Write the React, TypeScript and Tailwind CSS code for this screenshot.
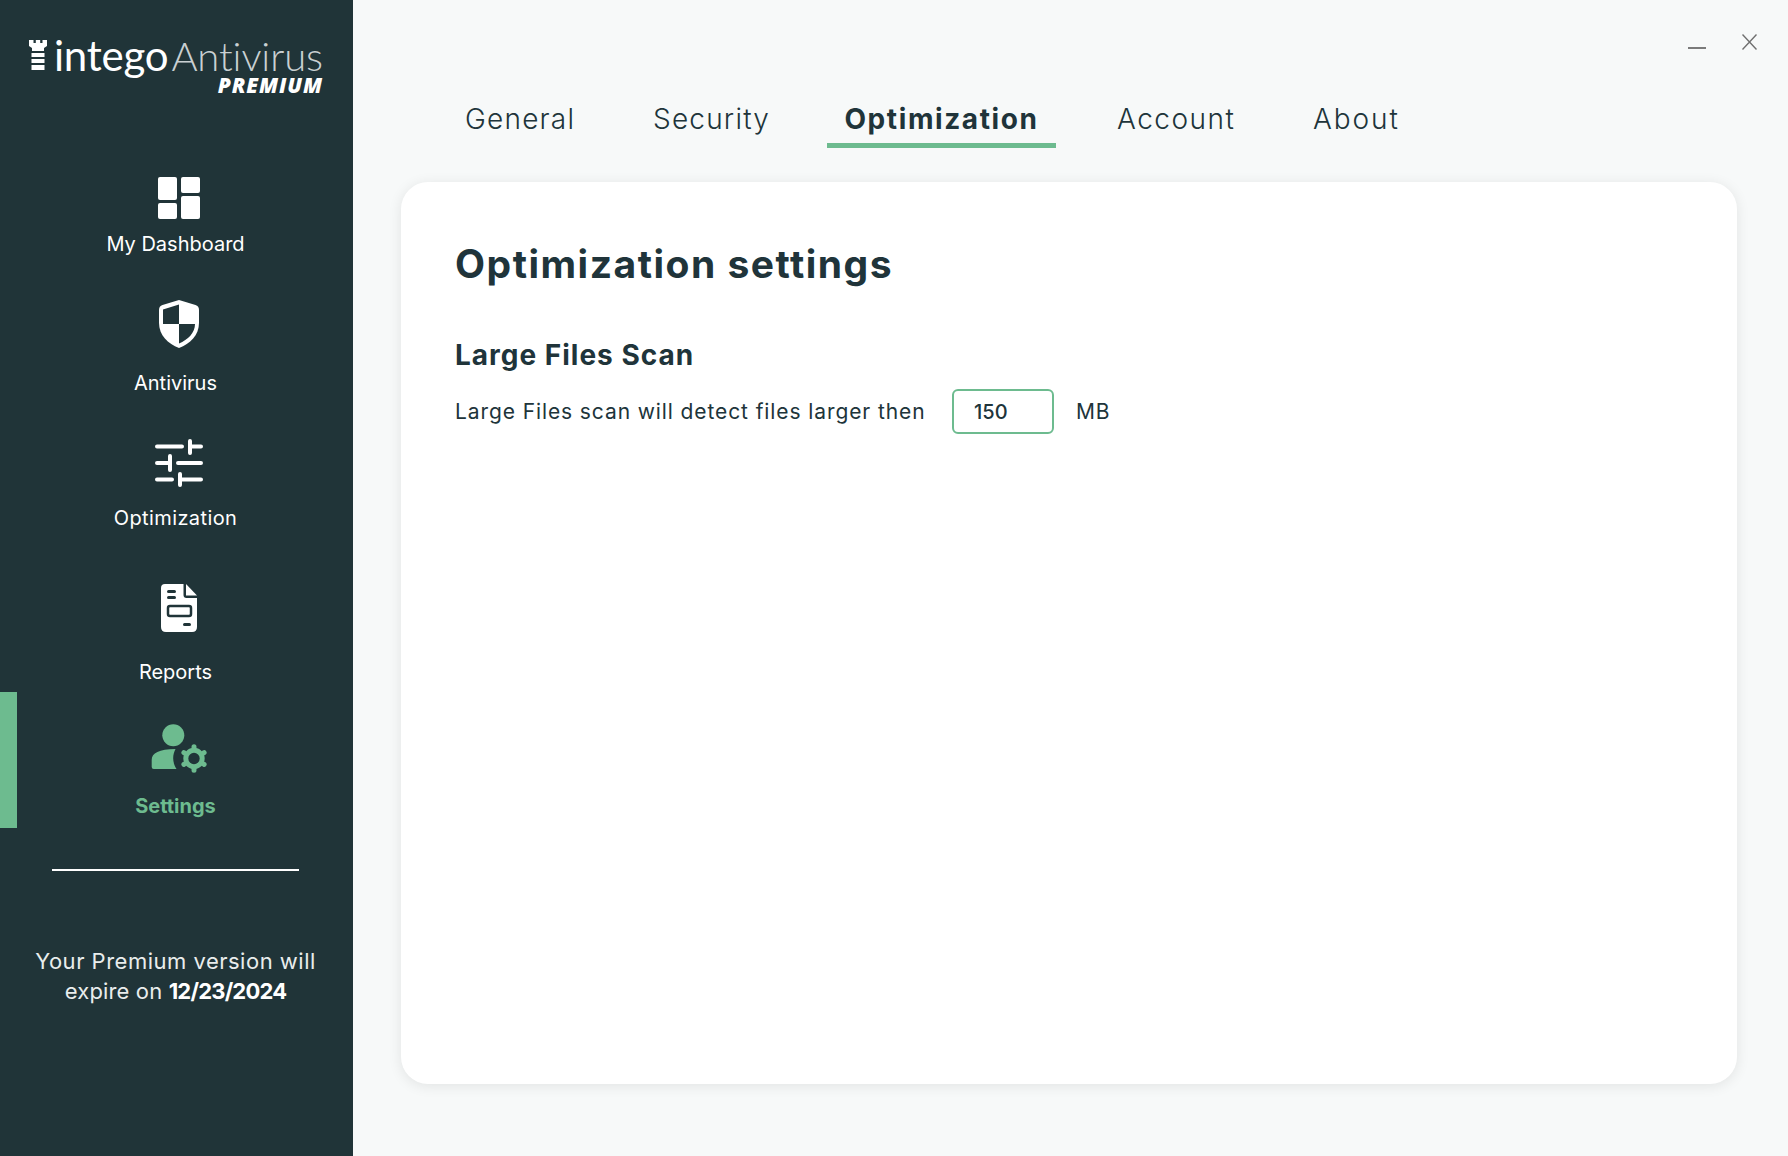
const sans = "font-['Inter',sans-serif]";
const DARK = "#203438";

function Dashboard() {
  return (
    <svg width="42" height="42" viewBox="0 0 42 42" fill="#fff">
      <rect x="0" y="0" width="19" height="23" rx="2" />
      <rect x="23" y="0" width="19" height="16" rx="2" />
      <rect x="0" y="26" width="19" height="16" rx="2" />
      <rect x="23" y="19" width="19" height="23" rx="2" />
    </svg>
  );
}

function Shield() {
  return (
    <svg width="40" height="48" viewBox="0 0 40 48">
      <path fill="#fff" d="M20 0 L36.5 5 Q40 6.2 40 10 V23 C40 35 31 44 20 48 C9 44 0 35 0 23 V10 Q0 6.2 3.5 5 Z" />
      <path fill={DARK} d="M20 4.5 L4 9.5 V24 H20 Z M20 24 V43.5 C29 39.5 36 33 36 24 Z" />
    </svg>
  );
}

function Sliders() {
  return (
    <svg width="48" height="48" viewBox="0 0 48 48" stroke="#fff" strokeWidth="4" strokeLinecap="round" fill="none">
      <path d="M2 7.5 H27 M35 2 V14 M35 7.5 H46" />
      <path d="M2 24 H15 M15 17 V31 M23 24 H46" />
      <path d="M2 40.5 H17 M25 35 V46 M25 40.5 H46" />
    </svg>
  );
}

function Reports() {
  return (
    <svg width="36" height="48" viewBox="0 0 36 48">
      <path fill="#fff" d="M4 0 H22.5 V11 Q22.5 14 25.5 14 H36 V43 Q36 48 31 48 H5 Q0 48 0 43 V4 Q0 0 4 0 Z" />
      <path fill="#fff" d="M25 0 L36 11.5 H25 Z" />
      <rect x="6" y="6" width="9" height="3" rx="1.5" fill={DARK} />
      <rect x="6" y="12" width="9" height="3" rx="1.5" fill={DARK} />
      <rect x="7" y="22" width="23" height="10" rx="2" fill="none" stroke={DARK} strokeWidth="2.5" />
      <rect x="22" y="39" width="8" height="3" rx="1.5" fill={DARK} />
    </svg>
  );
}

function Settings() {
  return (
    <svg width="56" height="49" viewBox="0 0 56 49" fill="#6dbb8f">
      <circle cx="22.3" cy="11.3" r="11" />
      <path d="M0.7 43 V36 C0.7 29 8 25 24.5 25 C21.5 31 21 38 25.5 45 H2.7 Q0.7 45 0.7 43 Z" />
      <circle cx="43" cy="34.5" r="8.2" fill="none" stroke="#6dbb8f" strokeWidth="5" />
      <path
        fill="none"
        stroke="#6dbb8f"
        strokeWidth="5"
        strokeLinecap="round"
        d="M43 23.5 V22.8 M43 45.5 V46.2 M33.5 29 L32.9 28.6 M52.5 40 L53.1 40.4 M33.5 40 L32.9 40.4 M52.5 29 L53.1 28.6"
      />
    </svg>
  );
}

function Tower() {
  return (
    <svg width="18" height="30" viewBox="0 0 18 30" fill="#fff">
      <path d="M0 0 H4.5 V3 H6.8 V0 H11.2 V3 H13.5 V0 H18 V6 L15 8 V11 H3 V8 L0 6 Z" />
      <rect x="2.5" y="13" width="13" height="4" />
      <rect x="2.5" y="19" width="13" height="4" />
      <path d="M2.5 25 H15.5 V30 H2.5 Z" />
    </svg>
  );
}

export default function App() {
  const labelCls = `w-full pr-[2px] text-center text-[20px] leading-6 text-white ${sans}`;
  const iconCls = "ml-[5px]";
  return (
    <div className="flex h-screen w-full overflow-hidden bg-[#f7f9f9]">
      <aside className="flex w-[353px] shrink-0 flex-col bg-[#203438]">
        <div className="flex h-[177px] flex-col items-end pr-[30px] pt-[37px]">
          <div className="flex items-center gap-[7px] leading-none">
            <div className="mb-[2px]"><Tower /></div>
            <div className="flex items-baseline leading-[36px] font-['Lato',sans-serif]">
              <span className="text-[42px] font-normal tracking-[-0.2px] text-white">intego</span>
              <span className="ml-[3px] text-[40px] font-light tracking-[-0.1px] text-[#c9d0d2]">Antivirus</span>
            </div>
          </div>
          <div className="text-[21px] font-extrabold italic leading-[22px] tracking-[0.9px] text-white font-['Open_Sans',sans-serif]">PREMIUM</div>
        </div>

        <div className="flex flex-col items-center">
          <div className={iconCls}><Dashboard /></div>
          <div className={`mt-[13px] mb-[44px] ${labelCls}`}>My Dashboard</div>
          <div className={iconCls}><Shield /></div>
          <div className={`mt-[23px] mb-[44px] ${labelCls}`}>Antivirus</div>
          <div className={iconCls}><Sliders /></div>
          <div className={`mt-[19px] mb-[54px] tracking-[0.4px] ${labelCls}`}>Optimization</div>
          <div className={iconCls}><Reports /></div>
          <div className={`mt-[28px] mb-[8px] ${labelCls}`}>Reports</div>
          <div className="relative flex h-[136px] w-full flex-col items-center pt-[32px]">
            <div className="absolute left-0 top-0 h-[136px] w-[17px] bg-[#6dbb8f]" />
            <div className={iconCls}><Settings /></div>
            <div className={`mt-[21px] w-full pr-[2px] text-center text-[20px] font-bold leading-6 text-[#6dbb8f] ${sans}`}>Settings</div>
          </div>
        </div>

        <div className="ml-[52px] mt-[41px] h-[2px] w-[247px] bg-white" />
        <div className={`mt-[75px] pr-[2px] text-center text-[22px] leading-[30px] tracking-[0.5px] text-[#e9eded] ${sans}`}>
          Your Premium version will
          <br />
          <span className="tracking-[0.15px]">expire on </span>
          <span className="font-bold tracking-[-0.8px] text-white">12/23/2024</span>
        </div>
      </aside>

      <main className="flex min-w-0 flex-1 flex-col">
        <div className="flex h-[52px] items-start justify-end">
          <div className="mt-[47px] mr-[36px] h-[2px] w-[18px] bg-[#7b7b7b]" />
          <svg className="mt-[34px] mr-[31px]" width="15" height="16" viewBox="0 0 15 16" stroke="#6f6f6f" strokeWidth="1.4" fill="none">
            <path d="M0.5 0.5 L14.5 15.5 M14.5 0.5 L0.5 15.5" />
          </svg>
        </div>

        <nav className={`ml-[93px] flex h-[96px] items-stretch text-[28px] text-[#20343a] ${sans}`}>
          <div className="w-[188px] shrink-0 pl-[19px] pt-[49px] font-light leading-9 tracking-[1.2px]">General</div>
          <div className="w-[193px] shrink-0 pl-[19px] pt-[49px] font-light leading-9 tracking-[1.2px]">Security</div>
          <div className="w-[229px] shrink-0 border-b-[5px] border-[#6dbb8f] pt-[49px] text-center font-bold leading-9 tracking-[1.6px]">Optimization</div>
          <div className="w-[257px] shrink-0 pl-[61px] pt-[49px] font-light leading-9 tracking-[1.5px]">Account</div>
          <div className="shrink-0 pt-[49px] font-light leading-9 tracking-[1.9px]">About</div>
        </nav>

        <section className={`ml-[48px] mr-[51px] mt-[34px] h-[902px] rounded-[27px] bg-white pl-[54px] pt-[60px] text-[#20343a] shadow-[0_2px_14px_rgba(0,0,0,0.09)] ${sans}`}>
          <h1 className="text-[39px] font-bold leading-[44px] tracking-[1.5px]">Optimization settings</h1>
          <h2 className="mt-[51px] text-[28px] font-bold leading-9 tracking-[1px]">Large Files Scan</h2>
          <div className="mt-[16px] flex items-center text-[21px]">
            <span className="w-[497px] shrink-0 tracking-[0.9px]">Large Files scan will detect files larger then</span>
            <input
              readOnly
              value="150"
              className="h-[45px] w-[102px] rounded-[6px] border-2 border-[#6dbb8f] bg-white pl-[20px] text-[20px] font-medium text-[#20343a] outline-none"
            />
            <span className="ml-[22px] tracking-[0.9px]">MB</span>
          </div>
        </section>
      </main>
    </div>
  );
}
